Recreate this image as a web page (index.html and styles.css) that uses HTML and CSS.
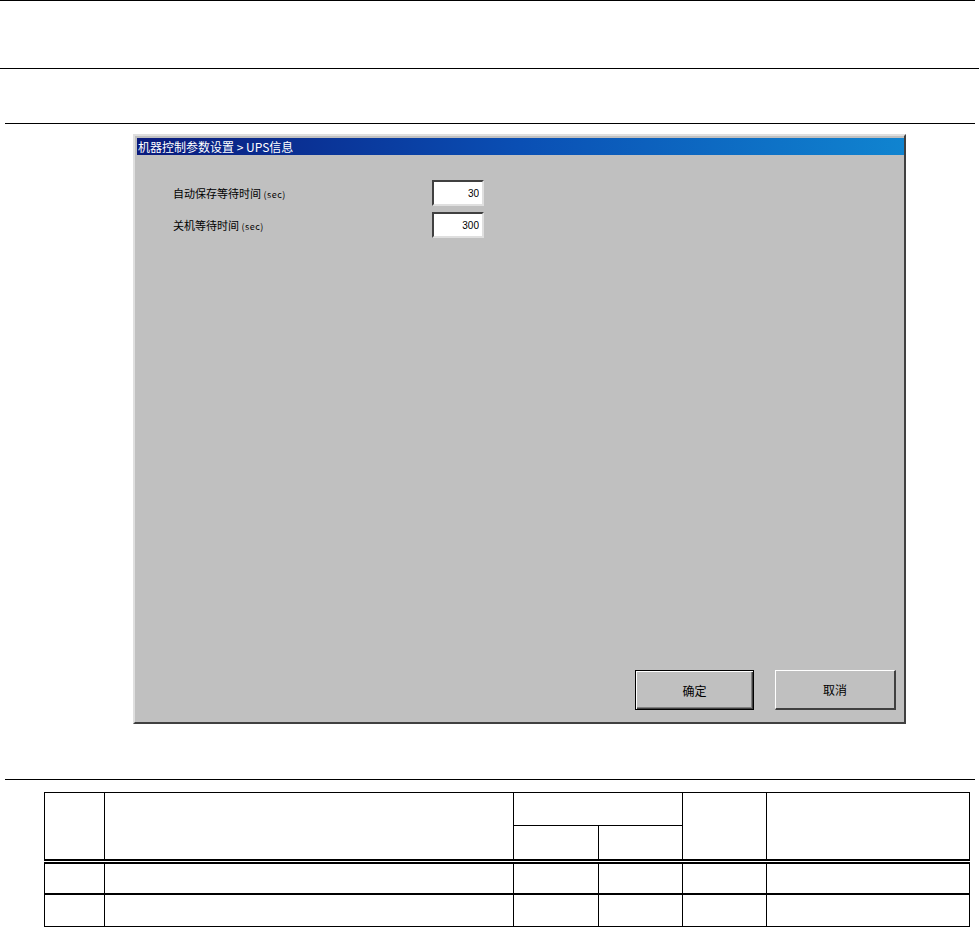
FILE: index.html
```html
<!DOCTYPE html>
<html lang="zh-CN">
<head>
    <meta charset="UTF-8">
    <meta name="viewport" content="width=device-width, initial-scale=1.0">
    <title>UPS信息</title>
    <link rel="stylesheet" href="styles.css">
</head>
<body>
    <div class="rule rule-top"></div>
    <div class="rule rule-second"></div>
    <div class="rule rule-third"></div>

    <div class="dialog">
        <div class="titlebar">机器控制参数设置 &gt; UPS信息</div>
        <div class="dialog-body">
            <div class="field">
                <span class="label">自动保存等待时间 <small>(sec)</small></span>
                <input type="text" class="num" value="30" readonly />
            </div>
            <div class="field">
                <span class="label">关机等待时间 <small>(sec)</small></span>
                <input type="text" class="num" value="300" readonly />
            </div>

            <div class="actions">
                <button class="btn btn-default">确定</button>
                <button class="btn">取消</button>
            </div>
        </div>
    </div>

    <div class="rule rule-fourth"></div>

    <table class="spec">
        <colgroup>
            <col style="width: 60px">
            <col style="width: 409px">
            <col style="width: 85px">
            <col style="width: 84px">
            <col style="width: 84px">
            <col style="width: 203px">
        </colgroup>
        <tr class="head-a">
            <td rowspan="2" class="head-end"></td>
            <td rowspan="2" class="head-end"></td>
            <td colspan="2"></td>
            <td rowspan="2" class="head-end"></td>
            <td rowspan="2" class="head-end"></td>
        </tr>
        <tr class="head-b">
            <td class="head-end"></td>
            <td class="head-end"></td>
        </tr>
        <tr class="row row-first">
            <td></td><td></td><td></td><td></td><td></td><td></td>
        </tr>
        <tr class="row row-last">
            <td></td><td></td><td></td><td></td><td></td><td></td>
        </tr>
    </table>
</body>
</html>
```

FILE: styles.css
```css
body {
    margin: 0;
    background-color: #fff;
    font-family: "Noto Sans CJK SC", "Noto Sans", sans-serif;
}
.rule {
    border-top: 1px solid #000;
    height: 0;
}
.rule-top {
    width: 975px;
}
.rule-second {
    margin-top: 67px;
    width: 979px;
}
.rule-third {
    margin-top: 54px;
    margin-left: 5px;
    width: 970px;
}
.rule-fourth {
    margin-top: 55px;
    margin-left: 5px;
    width: 970px;
}

.dialog {
    margin-top: 10px;
    margin-left: 133px;
    width: 773px;
    height: 590px;
    box-sizing: border-box;
    background-color: #c0c0c0;
    border-top: 2px solid #dfdfdf;
    border-left: 2px solid #dfdfdf;
    border-right: 2px solid #404040;
    border-bottom: 2px solid #404040;
    padding: 2px 0 0 2px;
    display: flex;
    flex-direction: column;
}
.titlebar {
    height: 17px;
    line-height: 17px;
    padding-left: 1px;
    color: #fff;
    font-size: 12px;
    background: linear-gradient(to right, #0a1a7c, #0a4fb4 50%, #1084d0);
    white-space: nowrap;
}
.dialog-body {
    flex: 1;
    display: flex;
    flex-direction: column;
    padding: 25px 8px 12px 36px;
}
.field {
    display: flex;
    align-items: center;
    height: 26px;
    margin-bottom: 6px;
}
.label {
    width: 259px;
    font-size: 11px;
    color: #000;
}
.label small {
    font-size: 9px;
    letter-spacing: 0.5px;
}
.num {
    width: 52px;
    height: 26px;
    box-sizing: border-box;
    margin: 0;
    padding: 0 3px 0 0;
    text-align: right;
    font-family: "Liberation Sans", Arial, sans-serif;
    font-size: 10px;
    color: #000;
    background-color: #fff;
    border-top: 2px solid #404040;
    border-left: 2px solid #404040;
    border-right: 2px solid #dfdfdf;
    border-bottom: 2px solid #dfdfdf;
    outline: none;
}
.actions {
    margin-top: auto;
    display: flex;
    justify-content: flex-end;
    gap: 21px;
}
.btn {
    width: 121px;
    height: 40px;
    box-sizing: border-box;
    background-color: #c0c0c0;
    font-family: "Noto Sans CJK SC", sans-serif;
    font-size: 12px;
    color: #000;
    border-top: 1px solid #fff;
    border-left: 1px solid #fff;
    border-right: 2px solid #404040;
    border-bottom: 2px solid #404040;
    padding: 0;
}
.btn-default {
    width: 119px;
    border: 1px solid #000;
    box-shadow: inset 1px 1px 0 #fff, inset -1px -1px 0 #404040, inset -2px -2px 0 #808080;
}

.spec {
    margin-top: 12px;
    margin-left: 44px;
    width: 925px;
    table-layout: fixed;
    border-collapse: collapse;
}
.spec td {
    border: 1px solid #000;
    padding: 0;
}
.head-a {
    height: 33px;
}
.head-b {
    height: 36px;
}
.spec td.head-end {
    border-bottom: 5px double #000;
}
.row-first {
    height: 32px;
}
.row-last {
    height: 33px;
}
.row-first td {
    border-bottom: 2px solid #000;
}
```
